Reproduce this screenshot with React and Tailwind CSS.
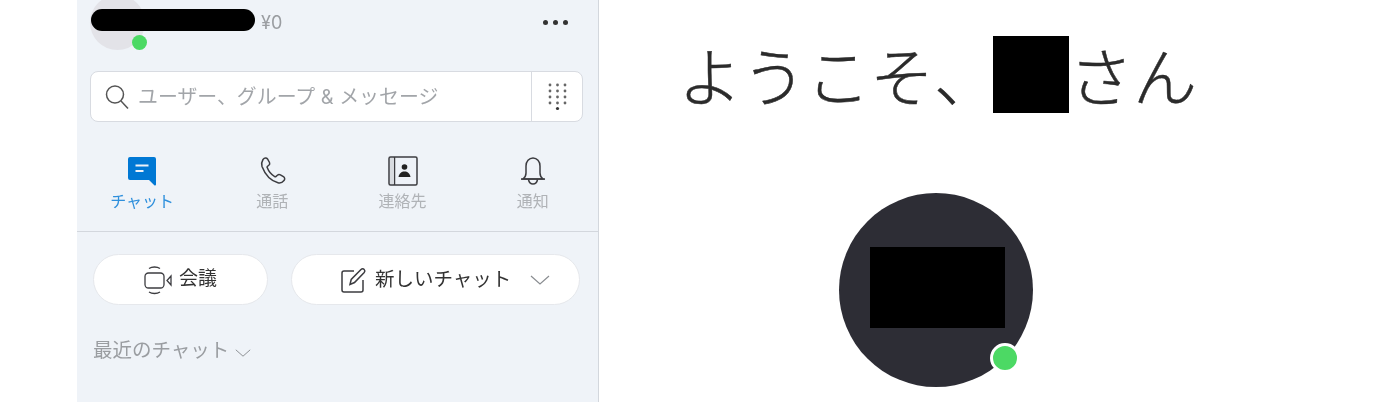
const cjk = 'font-["Inter","Noto_Sans_CJK_JP",sans-serif]';

const tabs = [
  { label: 'チャット', active: true, icon: ChatIcon },
  { label: '通話', icon: PhoneIcon },
  { label: '連絡先', icon: ContactsIcon },
  { label: '通知', icon: BellIcon },
];

function ChatIcon() {
  return (
    <svg width="30" height="30" viewBox="0 0 30 30">
      <path d="M3 1h24a2 2 0 0 1 2 2v25.500a1 1 0 0 1-1.700.7L22 24H3a2 2 0 0 1-2-2V3a2 2 0 0 1 2-2z" fill="#0078d4" />
      <path d="M8.500 9.500h13M8.500 15h8" stroke="#eef2f8" strokeWidth="2" fill="none" />
    </svg>
  );
}

function PhoneIcon() {
  return (
    <svg width="30" height="30" viewBox="-2 0 30 30" fill="none" stroke="#3c3c40" strokeWidth="1.500">
      <path d="M4 3.500c1.500-1.800 3.500-2 4.500-.5l2 3.500c.6 1.200.2 2-.7 2.800l-1.500 1.200c-.3.300-.3.700-.1 1.100 1.300 3.400 4.200 7.200 7.500 9.100.4.200.8.200 1.100-.1l1.600-1.400c.9-.8 2-.9 3-.3l3 1.800c1.500 1 1.700 2.500.6 3.800-1.400 1.700-3.500 3-6 2.300C11 24.500 5.500 17 3 10.500c-.8-2.500-.2-5 1-7z" />
    </svg>
  );
}

function ContactsIcon() {
  return (
    <svg width="30" height="30" viewBox="0 0 30 30" fill="none">
      <rect x="1" y="1" width="28" height="28" rx="1.500" fill="#eef2f8" stroke="#3c3c40" strokeWidth="1.500" />
      <path d="M6.500 1v28" stroke="#3c3c40" strokeWidth="1.500" />
      <rect x="2" y="2" width="4" height="26" fill="#d8dbe0" />
      <circle cx="16.500" cy="11" r="2.800" fill="#222" />
      <path d="M10.500 21c.5-3.500 3-5.500 6-5.500s5.500 2 6 5.500z" fill="#222" />
    </svg>
  );
}

function BellIcon() {
  return (
    <svg width="30" height="30" viewBox="0 0 30 30" fill="none" stroke="#3c3c40" strokeWidth="1.500">
      <path d="M5 23c2-1.500 3-3 3-6v-7c0-4.500 3-8 7-8s7 3.500 7 8v7c0 3 1 4.500 3 6z" />
      <path d="M3 23h24M10.500 23.500c.5 2.800 2.300 4.500 4.500 4.500s4-1.700 4.500-4.500" />
    </svg>
  );
}

function SearchIcon() {
  return (
    <svg width="24" height="26" viewBox="0 0 24 26" fill="none" stroke="#555" strokeWidth="1.500">
      <circle cx="10" cy="10.500" r="8.500" />
      <path d="M16 17l7 7.500" />
    </svg>
  );
}

function DialIcon() {
  const dots = [];
  for (let y = 0; y < 4; y++) {
    for (let x = 0; x < 3; x++) dots.push(<circle key={`${x}-${y}`} cx={3 + x * 7.500} cy={2 + y * 6} r="1.400" fill="#666" />);
  }
  return (
    <svg width="21" height="28" viewBox="0 0 21 28">
      {dots}
      <circle cx="10.500" cy="25.500" r="1.600" fill="#333" />
    </svg>
  );
}

function VideoIcon() {
  return (
    <svg width="30" height="30" viewBox="0 0 30 30" fill="none" stroke="#3c3c40" strokeWidth="1.300">
      <rect x="1" y="8" width="19" height="15" rx="3.500" />
      <path d="M27 11l-4 4.500 4 4.500z" />
      <path d="M5 3.500c3-2 8-2 11 0M5 27c3 2 8 2 11 0" />
    </svg>
  );
}

function EditIcon() {
  return (
    <svg width="26" height="26" viewBox="0 0 26 26" fill="none" stroke="#3c3c40" strokeWidth="1.500">
      <path d="M13 4H3a2 2 0 0 0-2 2v17a2 2 0 0 0 2 2h17a2 2 0 0 0 2-2V13" />
      <path d="M9 17.500l1.200-5L20 2.500c1-1 2.300-1 3.200 0 .8.800.8 2 0 3L13.500 15.500z" />
    </svg>
  );
}

function Chevron({ size = 20, color = '#8a8d91' }) {
  return (
    <svg width={size} height={size / 2} viewBox="0 0 20 10" fill="none" stroke={color} strokeWidth="1.200">
      <path d="M1 1l9 8 9-8" />
    </svg>
  );
}

export default function App() {
  return (
    <div className={`flex h-[402px] w-[1400px] overflow-hidden bg-white blur-[0.4px] ${cjk}`}>
      <div className="w-[77px] shrink-0" />

      {/* Sidebar */}
      <aside className="flex h-full w-[522px] shrink-0 flex-col border-r border-[#d3d7dd] bg-[#eff3f8]">
        <div className="relative h-[71px] shrink-0">
          <div className="absolute left-[13px] top-[-5px] h-[55px] w-[55px] rounded-full bg-[#e3e3e8]" />
          <div className="absolute left-[14px] top-[9px] h-[22px] w-[164px] rounded-full bg-black" />
          <div className="absolute left-[55px] top-[35px] h-[15px] w-[15px] rounded-full bg-[#4cd964]" />
          <span className="absolute left-[184px] top-[11px] text-[18px] leading-6 text-[#9a9da1]">¥0</span>
          <div className="absolute left-[466px] top-[20px] flex gap-[5px]">
            <span className="h-[5px] w-[5px] rounded-full bg-[#333]" />
            <span className="h-[5px] w-[5px] rounded-full bg-[#333]" />
            <span className="h-[5px] w-[5px] rounded-full bg-[#333]" />
          </div>
        </div>

        <div className="ml-[13px] flex h-[51px] w-[493px] shrink-0 items-center rounded-[8px] border border-[#d8dbe1] bg-white">
          <div className="flex flex-1 items-center gap-[9px] pl-[14px]">
            <SearchIcon />
            <span className="whitespace-nowrap text-[19.900px] leading-6 text-[#a2a5a9]">ユーザー、グループ &amp; メッセージ</span>
          </div>
          <div className="flex h-full w-[51px] items-center justify-center border-l border-[#d8dbe1]">
            <DialIcon />
          </div>
        </div>

        <div className="grid h-[110px] shrink-0 grid-cols-4 border-b border-[#d3d7dd] pt-[34px]">
          {tabs.map((tab) => (
            <div key={tab.label} className="flex flex-col items-center">
              <tab.icon />
              <span className={`mt-[5px] text-[16px] leading-5 ${tab.active ? 'text-[#2e8fdc]' : 'text-[#b0b3b7]'}`}>{tab.label}</span>
            </div>
          ))}
        </div>

        <div className="mt-[22px] flex shrink-0 gap-[23px] pl-[16px]">
          <button className="flex h-[51px] w-[175px] items-center justify-center gap-[5px] rounded-full border border-[#e6e8ec] bg-white">
            <VideoIcon />
            <span className="text-[19px] text-[#333]">会議</span>
          </button>
          <button className="flex h-[51px] w-[289px] items-center rounded-full border border-[#e6e8ec] bg-white pl-[49px]">
            <EditIcon />
            <span className="ml-[8px] text-[19.500px] text-[#333]">新しいチャット</span>
            <span className="ml-[19px]"><Chevron /></span>
          </button>
        </div>

        <div className="mt-[33px] flex items-center gap-[6px] pl-[16px]">
          <span className="text-[19.500px] leading-6 text-[#9a9da1]">最近のチャット</span>
          <span className="mt-[5px]"><Chevron size={16} /></span>
        </div>
      </aside>

      {/* Welcome */}
      <main className="flex w-[674px] shrink-0 flex-col items-center pt-[36px]">
        <h1 className="flex h-[77px] items-center whitespace-nowrap pl-[3px] text-[64px] font-light text-[#2b2b2b] [-webkit-text-stroke:0.5px_#2b2b2b]">
          <span className="-mr-[5px] mt-[6px]">ようこそ、</span>
          <span className="h-[77px] w-[76px] bg-black" />
          <span className="mt-[6px]">さん</span>
        </h1>
        <div className="relative mt-[80px] flex h-[194px] w-[194px] items-center justify-center rounded-full bg-[#2d2d35]">
          <div className="mb-[5px] ml-[3px] h-[81px] w-[135px] bg-black" />
          <div className="absolute bottom-[14px] right-[13px] h-[30px] w-[30px] rounded-full border-[3px] border-white bg-[#4cd964]" />
        </div>
      </main>
    </div>
  );
}
